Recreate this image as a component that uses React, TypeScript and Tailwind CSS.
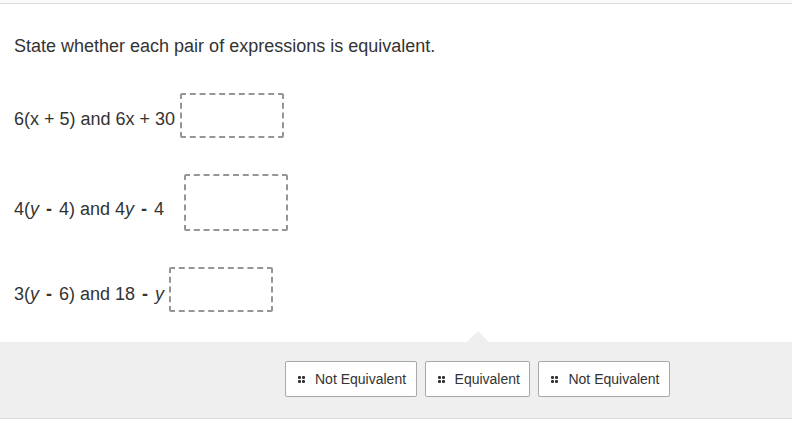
import React from 'react'

const Minus = () => <span className="inline-block mx-[2px] font-bold">-</span>

function DropBox({ className }: { className: string }) {
  return <div className={`shrink-0 w-[104px] border-2 border-dashed border-[#959595] rounded-[2px] bg-white ${className}`} />
}

function Chip({ label }: { label: string }) {
  return (
    <button className="h-[36px] flex items-center bg-white border border-[#a8a8a8] rounded-[2px] pl-[12px] pr-[9.5px] text-[14px] text-[#333]">
      {/* drag handle */}
      <span className="grid grid-cols-2 gap-[1px] w-[7px] h-[7px] mr-[10px]">
        <span className="w-[3px] h-[3px] bg-[#333] rounded-[1px]" />
        <span className="w-[3px] h-[3px] bg-[#333] rounded-[1px]" />
        <span className="w-[3px] h-[3px] bg-[#333] rounded-[1px]" />
        <span className="w-[3px] h-[3px] bg-[#333] rounded-[1px]" />
      </span>
      {label}
    </button>
  )
}

export default function App() {
  return (
    <div className="w-[792px] h-[423px] bg-white text-[#333] font-['Liberation_Sans',Arial,sans-serif] overflow-hidden">
      <div className="h-[4px] border-b border-[#dcdcdc] bg-[#fafafa]" />

      {/* Question */}
      <div className="px-[14px] pt-[31px] flex flex-col gap-[36px] text-[18px] leading-[22px]">
        <p>State whether each pair of expressions is equivalent.</p>

        <div className="flex items-center">
          <span className="pt-[7px]">6(x + 5) and 6x + 30</span>
          <DropBox className="h-[45px] ml-[5px]" />
        </div>

        <div className="flex items-center">
          <span className="pt-[12px]">
            4(<i>y</i> <Minus /> 4) and 4<i>y</i> <Minus /> 4
          </span>
          <DropBox className="h-[57px] ml-[20px]" />
        </div>

        <div className="flex items-center">
          <span className="pt-[8px]">
            3(<i>y</i> <Minus /> 6) and 18 <Minus /> <i>y</i>
          </span>
          <DropBox className="h-[45px] ml-[5px]" />
        </div>
      </div>

      {/* Answer tray */}
      <div className="relative mt-[30px] h-[77px] bg-[#efefef] border-b border-[#dadada]">
        <div className="absolute left-[467px] top-[-11px] w-0 h-0 border-l-[11px] border-r-[11px] border-b-[11px] border-l-transparent border-r-transparent border-b-[#efefef]" />
        <div className="flex gap-[8px] pl-[285px] pt-[19px]">
          <Chip label="Not Equivalent" />
          <Chip label="Equivalent" />
          <Chip label="Not Equivalent" />
        </div>
      </div>
    </div>
  )
}
